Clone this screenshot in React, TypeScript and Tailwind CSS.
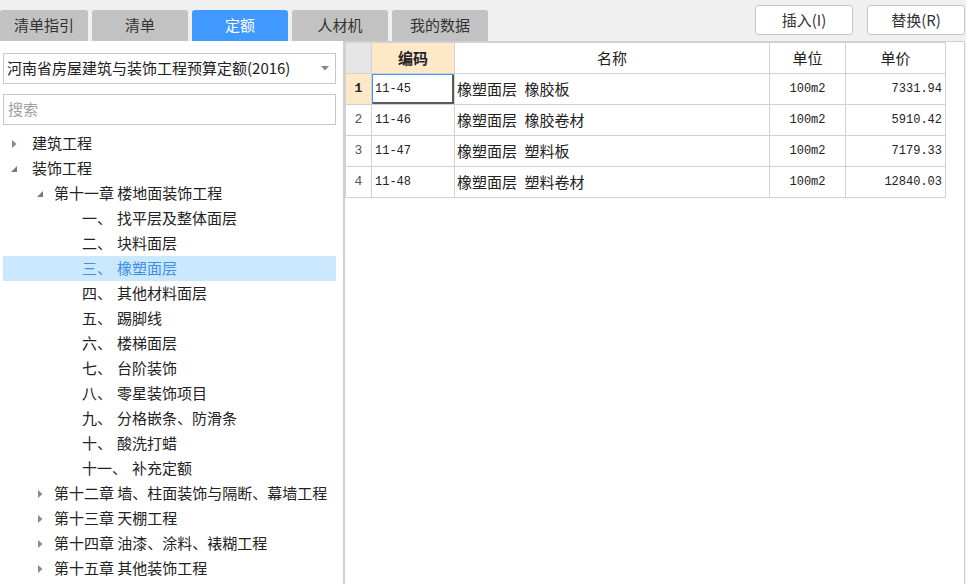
import React from 'react';

const CJK = '"Noto Sans CJK SC", "Noto Sans", sans-serif';
const MONO = '"Liberation Mono", "Noto Sans CJK SC", monospace';

const TABS = ['清单指引', '清单', '定额', '人材机', '我的数据'];

type Node = { label: string; num?: string; level: number; open?: boolean; leaf?: boolean; active?: boolean };

const TREE: Node[] = [
  { label: '建筑工程', level: 0, open: false },
  { label: '装饰工程', level: 0, open: true },
  { label: '第十一章 楼地面装饰工程', level: 1, open: true },
  { num: '一、', label: '找平层及整体面层', level: 2, leaf: true },
  { num: '二、', label: '块料面层', level: 2, leaf: true },
  { num: '三、', label: '橡塑面层', level: 2, leaf: true, active: true },
  { num: '四、', label: '其他材料面层', level: 2, leaf: true },
  { num: '五、', label: '踢脚线', level: 2, leaf: true },
  { num: '六、', label: '楼梯面层', level: 2, leaf: true },
  { num: '七、', label: '台阶装饰', level: 2, leaf: true },
  { num: '八、', label: '零星装饰项目', level: 2, leaf: true },
  { num: '九、', label: '分格嵌条、防滑条', level: 2, leaf: true },
  { num: '十、', label: '酸洗打蜡', level: 2, leaf: true },
  { num: '十一、', label: '补充定额', level: 2, leaf: true },
  { label: '第十二章 墙、柱面装饰与隔断、幕墙工程', level: 1, open: false },
  { label: '第十三章 天棚工程', level: 1, open: false },
  { label: '第十四章 油漆、涂料、裱糊工程', level: 1, open: false },
  { label: '第十五章 其他装饰工程', level: 1, open: false },
];

const ROWS = [
  { code: '11-45', name: '橡塑面层 橡胶板', unit: '100m2', price: '7331.94' },
  { code: '11-46', name: '橡塑面层 橡胶卷材', unit: '100m2', price: '5910.42' },
  { code: '11-47', name: '橡塑面层 塑料板', unit: '100m2', price: '7179.33' },
  { code: '11-48', name: '橡塑面层 塑料卷材', unit: '100m2', price: '12840.03' },
];

function Caret({ open }: { open?: boolean }) {
  if (open) {
    return (
      <svg width="8" height="8" viewBox="0 0 8 8" className="shrink-0">
        <path d="M7 1 L7 7 L1 7 Z" fill="#7a7a7a" />
      </svg>
    );
  }
  return (
    <svg width="8" height="10" viewBox="0 0 8 10" className="shrink-0">
      <path d="M2 1 L6.5 5 L2 9 Z" fill="#8a8a8a" />
    </svg>
  );
}

function TreeRow({ n }: { n: Node }) {
  const base = 'h-[25px] flex items-center text-[15px] whitespace-nowrap ml-[3px] mr-[7px]';
  if (n.leaf) {
    return (
      <div className={`${base} ${n.active ? 'bg-[#cce8ff] text-[#3d8fe6]' : 'text-[#222]'}`}>
        <span className="ml-[79px]">{n.num}</span>
        <span className="ml-[5px]">{n.label}</span>
      </div>
    );
  }
  const pad = n.level === 0 ? 'pl-[7px]' : 'pl-[33px]';
  return (
    <div className={`${base} ${pad} text-[#222]`}>
      <span className="w-[22px] flex items-center">
        <Caret open={n.open} />
      </span>
      <span className={n.level === 0 ? '' : 'ml-[-4px]'}>{n.label}</span>
    </div>
  );
}

export default function App() {
  return (
    <div className="w-[966px] h-[584px] bg-[#f0f0f0] flex flex-col overflow-hidden" style={{ fontFamily: CJK }}>
      {/* top bar: tabs + actions */}
      <div className="h-[41px] flex justify-between shrink-0">
        <div className="flex gap-[4px] self-end h-[31px]">
          {TABS.map((t, i) => (
            <div
              key={t}
              className={`h-full flex items-center justify-center rounded-t-[3px] text-[15px] ${
                i === 0 ? 'w-[88px]' : 'w-[96px]'
              } ${t === '定额' ? 'bg-[#4099ff] text-white' : 'bg-[#c2c2c2] text-[#333]'}`}
            >
              {t}
            </div>
          ))}
        </div>
        <div className="flex gap-[14px] pt-[5px] pr-[1px]">
          {['插入(I)', '替换(R)'].map((b) => (
            <button
              key={b}
              className="w-[98px] h-[30px] bg-white border border-[#c6c6c6] rounded-[3px] text-[15px] text-[#333]"
            >
              {b}
            </button>
          ))}
        </div>
      </div>

      <div className="flex-1 flex min-h-0">
        {/* left tree panel */}
        <div className="w-[343px] bg-white shrink-0 pt-[12px]">
          <div className="ml-[3px] mr-[7px] h-[31px] border border-[#c8c8c8] flex items-center justify-between pl-[3px] pr-[6px] text-[15px] text-[#222]">
            <span>河南省房屋建筑与装饰工程预算定额(2016)</span>
            <svg width="8" height="5" viewBox="0 0 8 5">
              <path d="M0 0 L8 0 L4 4.5 Z" fill="#888" />
            </svg>
          </div>
          <div className="ml-[3px] mr-[7px] mt-[10px] h-[31px] border border-[#c8c8c8] flex items-center pl-[4px] text-[15px] text-[#a0a0a0]">
            搜索
          </div>
          <div className="mt-[6px]">
            {TREE.map((n, i) => (
              <TreeRow key={i} n={n} />
            ))}
          </div>
        </div>

        {/* right grid panel */}
        <div className="flex-1 bg-white border-l-[2px] border-l-[#cfcfcf] border-t border-t-[#cfcfcf] border-r border-r-[#cfcfcf] mr-[1px]">
          <table className="border-collapse table-fixed text-[15px] text-[#222]">
            <colgroup>
              <col className="w-[26px]" />
              <col className="w-[83px]" />
              <col className="w-[315px]" />
              <col className="w-[76px]" />
              <col className="w-[100px]" />
            </colgroup>
            <thead>
              <tr className="h-[31px]">
                <th className="bg-[#e6e6e6] border border-[#d2d2d2]"></th>
                <th className="bg-[#fde8c8] border border-[#d2d2d2] font-bold">编码</th>
                <th className="border border-[#d2d2d2] font-normal">名称</th>
                <th className="border border-[#d2d2d2] font-normal">单位</th>
                <th className="border border-[#d2d2d2] font-normal">单价</th>
              </tr>
            </thead>
            <tbody>
              {ROWS.map((r, i) => (
                <tr key={r.code} className="h-[31px]">
                  <td
                    className={`border border-[#d2d2d2] text-center text-[13px] ${
                      i === 0 ? 'bg-[#fde8c8] font-bold text-[#222]' : 'text-[#555]'
                    }`}
                    style={{ fontFamily: MONO }}
                  >
                    {i + 1}
                  </td>
                  <td
                    className={`border border-[#d2d2d2] pl-[3px] text-[12px] ${
                      i === 0 ? 'shadow-[inset_1px_1px_0_#3c96ff,inset_-2px_-2px_0_#5a5a5a]' : ''
                    }`}
                    style={{ fontFamily: MONO }}
                  >
                    {r.code}
                  </td>
                  <td className="border border-[#d2d2d2] pl-[2px] whitespace-pre">{r.name.replace(' ', '\u2002')}</td>
                  <td className="border border-[#d2d2d2] text-center text-[12px]" style={{ fontFamily: MONO }}>
                    {r.unit}
                  </td>
                  <td className="border border-[#d2d2d2] text-right pr-[3px] text-[12px]" style={{ fontFamily: MONO }}>
                    {r.price}
                  </td>
                </tr>
              ))}
            </tbody>
          </table>
        </div>
      </div>
    </div>
  );
}
